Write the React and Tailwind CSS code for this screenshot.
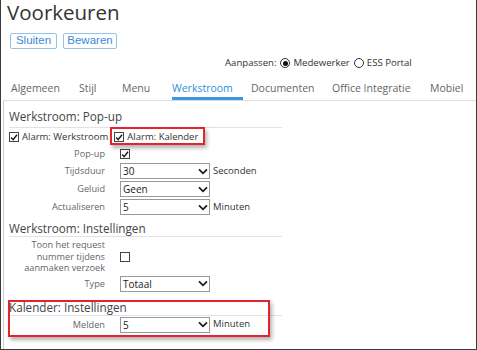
import React from "react";

function Check({ checked }) {
  return (
    <div className="w-[10px] h-[10px] border border-[#444] bg-white flex items-center justify-center shrink-0">
      {checked && (
        <svg width="9" height="9" viewBox="0 0 9 9">
          <path d="M1.2 4.6 L3.5 7 L7.9 1.4" stroke="#1a1a1a" strokeWidth="1.6" fill="none" />
        </svg>
      )}
    </div>
  );
}

function Radio({ checked }) {
  return (
    <div className="w-[10px] h-[10px] rounded-full border border-[#333] bg-white flex items-center justify-center shrink-0">
      {checked && <div className="w-[5px] h-[5px] rounded-full bg-[#111]" />}
    </div>
  );
}

function Select({ value }) {
  return (
    <div className="w-[90px] h-[16px] border border-[#999] bg-white flex items-center justify-between pl-[2px] pr-[1px] text-[10px] leading-[14px] text-[#222] shrink-0">
      <span>{value}</span>
      <svg width="10" height="7" viewBox="0 0 10 7">
        <path d="M1 1.3 L5 5.3 L9 1.3" stroke="#1a1a1a" strokeWidth="1.7" fill="none" />
      </svg>
    </div>
  );
}

function Label({ children }) {
  return (
    <div className="w-[96px] text-right text-[9.2px] leading-[11.5px] text-[#666] shrink-0">{children}</div>
  );
}

function Heading({ children, className }) {
  return (
    <div className={"w-[273px] border-b border-[#e2e2e2] text-[11.7px] leading-[16px] text-[#444] " + className}>
      {children}
    </div>
  );
}

export default function App() {
  return (
    <div className="w-[477px] h-[350px] bg-white border-x border-b border-[#3a3a3a] flex flex-col overflow-hidden relative font-['Open_Sans',sans-serif]">
      <div className="pl-[6px] h-[24px] text-[20.5px] leading-[24px] text-[#333]">Voorkeuren</div>

      <div className="flex gap-[6px] pl-[9px] mt-[9px]">
        <div className="w-[47px] h-[16px] border border-[#8fc4ee] rounded-[2px] flex items-center justify-center font-['Liberation_Sans',Arial,sans-serif] text-[11.5px] text-[#3b8ad8]">
          Sluiten
        </div>
        <div className="w-[54px] h-[16px] border border-[#8fc4ee] rounded-[2px] flex items-center justify-center font-['Liberation_Sans',Arial,sans-serif] text-[11.5px] text-[#3b8ad8]">
          Bewaren
        </div>
      </div>

      <div className="mt-[8px] h-[12px] pl-[224px] flex items-center text-[9.6px] leading-[12px] text-[#333]">
        <span>Aanpassen:</span>
        <span className="ml-[4px]"><Radio checked /></span>
        <span className="ml-[3px]">Medewerker</span>
        <span className="ml-[4px]"><Radio /></span>
        <span className="ml-[3px]">ESS Portal</span>
      </div>

      <div className="ml-[2px] h-[32px] border-b border-[#ddd] flex pl-[8px] text-[10.5px] leading-[14px] text-[#666]">
        <div className="w-[68px] h-[31px] pt-[12px]">Algemeen</div>
        <div className="w-[43px] h-[31px] pt-[12px]">Stijl</div>
        <div className="w-[50px] h-[31px] pt-[12px]">Menu</div>
        <div className="w-[71px] h-[31px] pt-[12px] text-[#2e8fd8] border-b-[3px] border-[#3a97e0]">Werkstroom</div>
        <div className="ml-[8px] w-[81px] h-[31px] pt-[12px]">Documenten</div>
        <div className="w-[98px] h-[31px] pt-[12px]">Office Integratie</div>
        <div className="h-[31px] pt-[12px]">Mobiel</div>
      </div>

      <div className="ml-[2px] flex-1 border-l border-[#ccc] pl-[5px] flex flex-col text-[9.5px] text-[#333]">
        <Heading className="pt-[7px] pb-[3px]">Werkstroom: Pop-up</Heading>

        <div className="h-[18px] flex items-center">
          <Check checked />
          <span className="ml-[3px] leading-[12px]">Alarm: Werkstroom</span>
          <span className="ml-[6px]"><Check checked /></span>
          <span className="ml-[3px] leading-[12px]">Alarm: Kalender</span>
        </div>

        <div className="h-[16px] flex items-center">
          <Label>Pop-up</Label>
          <div className="ml-[15px]"><Check checked /></div>
        </div>

        <div className="h-[18px] flex items-center">
          <Label>Tijdsduur</Label>
          <div className="ml-[15px]"><Select value="30" /></div>
          <span className="ml-[3px]">Seconden</span>
        </div>

        <div className="h-[18px] flex items-center">
          <Label>Geluid</Label>
          <div className="ml-[15px]"><Select value="Geen" /></div>
        </div>

        <div className="h-[18px] flex items-center">
          <Label>Actualiseren</Label>
          <div className="ml-[15px]"><Select value="5" /></div>
          <span className="ml-[3px]">Minuten</span>
        </div>

        <Heading className="pt-[4px]">Werkstroom: Instellingen</Heading>

        <div className="flex items-center pt-[2px] pb-[1px]">
          <Label>
            Toon het request
            <br />
            nummer tijdens
            <br />
            aanmaken verzoek
          </Label>
          <div className="ml-[15px] mt-[2px]"><Check /></div>
        </div>

        <div className="h-[18px] flex items-center">
          <Label>Type</Label>
          <div className="ml-[15px]"><Select value="Totaal" /></div>
        </div>

        <Heading className="pt-[6px]">Kalender: Instellingen</Heading>

        <div className="h-[18px] flex items-center">
          <Label>Melden</Label>
          <div className="ml-[15px]"><Select value="5" /></div>
          <span className="ml-[3px]">Minuten</span>
        </div>
      </div>

      <div className="absolute left-[109px] top-[127px] w-[95px] h-[18px] border-2 border-[#e3252b] shadow-[2px_3px_4px_rgba(0,0,0,0.3)]" />
      <div className="absolute left-[7px] top-[300px] w-[262px] h-[37px] border-2 border-[#e3252b] shadow-[2px_3px_4px_rgba(0,0,0,0.3)]" />
    </div>
  );
}
